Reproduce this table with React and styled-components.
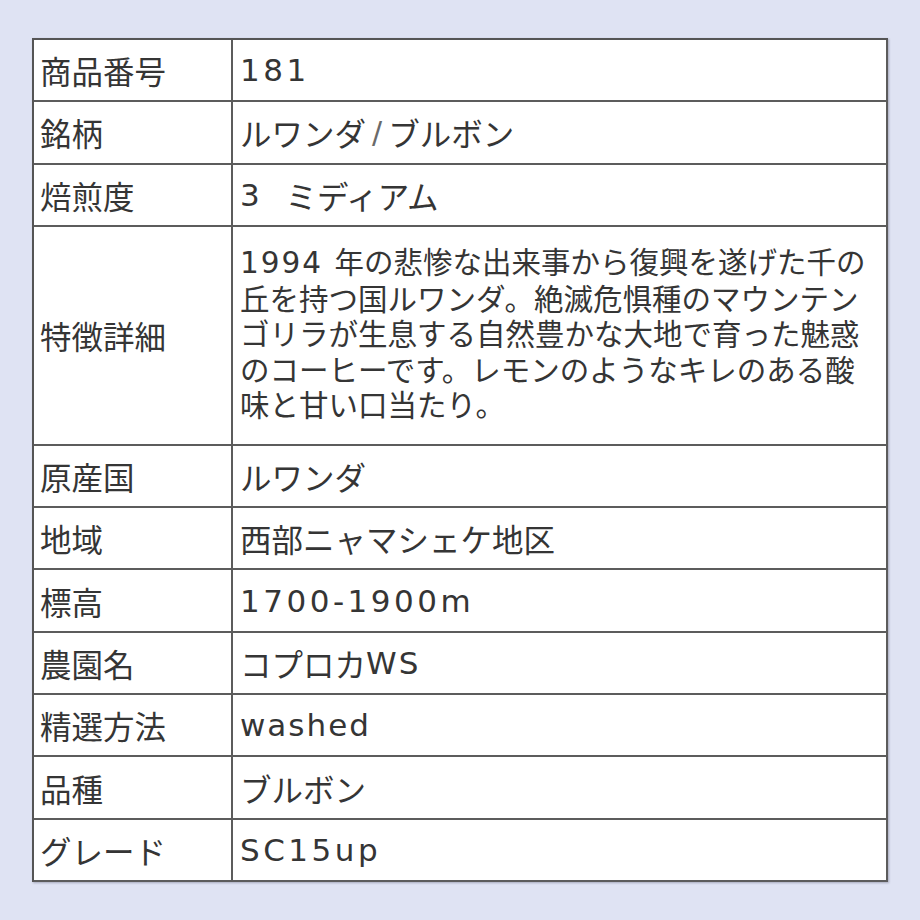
import React from "react";
import styled, { createGlobalStyle } from "styled-components";

const Global = createGlobalStyle`
  html, body {
    margin: 0;
    padding: 0;
    background: #dfe3f3;
  }
  body {
    font-family: "Noto Sans CJK JP", "Liberation Sans", sans-serif;
  }
`;

const Page = styled.div`
  width: 920px;
  height: 920px;
  box-sizing: border-box;
  padding: 38px 32px 0 32px;
  background: #dfe3f3;
`;

const Table = styled.div`
  display: grid;
  grid-template-columns: 199px 1fr;
  grid-template-rows: repeat(3, 62.3px) 219px repeat(7, 62.3px);
  width: 856px;
  box-sizing: border-box;
  background: #ffffff;
  border-top: 2px solid #555;
  border-left: 2px solid #555;
  box-shadow: 1px 1px 2px rgba(60, 60, 80, 0.35);
`;

const Cell = styled.div`
  box-sizing: border-box;
  display: flex;
  align-items: center;
  border-right: 2px solid #5c5c5c;
  border-bottom: 2px solid #5c5c5c;
  padding: 0 8px 0 ${(p) => (p.$label ? "6px" : "7px")};
  font-family: "Noto Sans CJK JP", sans-serif;
  font-size: 31.5px;
  color: #353535;
  white-space: nowrap;
`;

const Latin = styled.span`
  font-family: "DejaVu Sans", "Liberation Sans", sans-serif;
  font-size: ${(p) => (p.$small ? "29.5px" : "31px")};
  letter-spacing: ${(p) => (p.$wide ? "3.5px" : "2px")};
`;

const Slash = styled.span`
  font-family: "DejaVu Sans", sans-serif;
  font-size: 30px;
  color: #6a6a6a;
  margin: 0 6px;
`;

const Detail = styled.div`
  font-family: "Liberation Sans", "Noto Sans CJK JP", sans-serif;
  font-size: 29.5px;
  line-height: 35.4px;
  padding-bottom: 2px;
`;

const Line = styled.span`
  display: block;
`;

const rows = [
  ["商品番号", <Latin $wide>181</Latin>],
  [
    "銘柄",
    <>
      ルワンダ<Slash>/</Slash>ブルボン
    </>,
  ],
  [
    "焙煎度",
    <>
      <Latin>3{"\u00a0\u00a0"}</Latin>ミディアム
    </>,
  ],
  [
    "特徴詳細",
    <Detail>
      <Line>
        <Latin $small>1994 </Latin>年の悲惨な出来事から復興を遂げた千の
      </Line>
      <Line>丘を持つ国ルワンダ。絶滅危惧種のマウンテン</Line>
      <Line>ゴリラが生息する自然豊かな大地で育った魅惑</Line>
      <Line>のコーヒーです。レモンのようなキレのある酸</Line>
      <Line>味と甘い口当たり。</Line>
    </Detail>,
  ],
  ["原産国", "ルワンダ"],
  ["地域", "西部ニャマシェケ地区"],
  ["標高", <Latin $wide>1700-1900m</Latin>],
  [
    "農園名",
    <>
      コプロカ<Latin>WS</Latin>
    </>,
  ],
  ["精選方法", <Latin>washed</Latin>],
  ["品種", "ブルボン"],
  ["グレード", <Latin $wide>SC15up</Latin>],
];

export default function App() {
  return (
    <>
      <Global />
      <Page>
        <Table>
          {rows.map(([label, value]) => (
            <React.Fragment key={label}>
              <Cell $label>{label}</Cell>
              <Cell>{value}</Cell>
            </React.Fragment>
          ))}
        </Table>
      </Page>
    </>
  );
}
